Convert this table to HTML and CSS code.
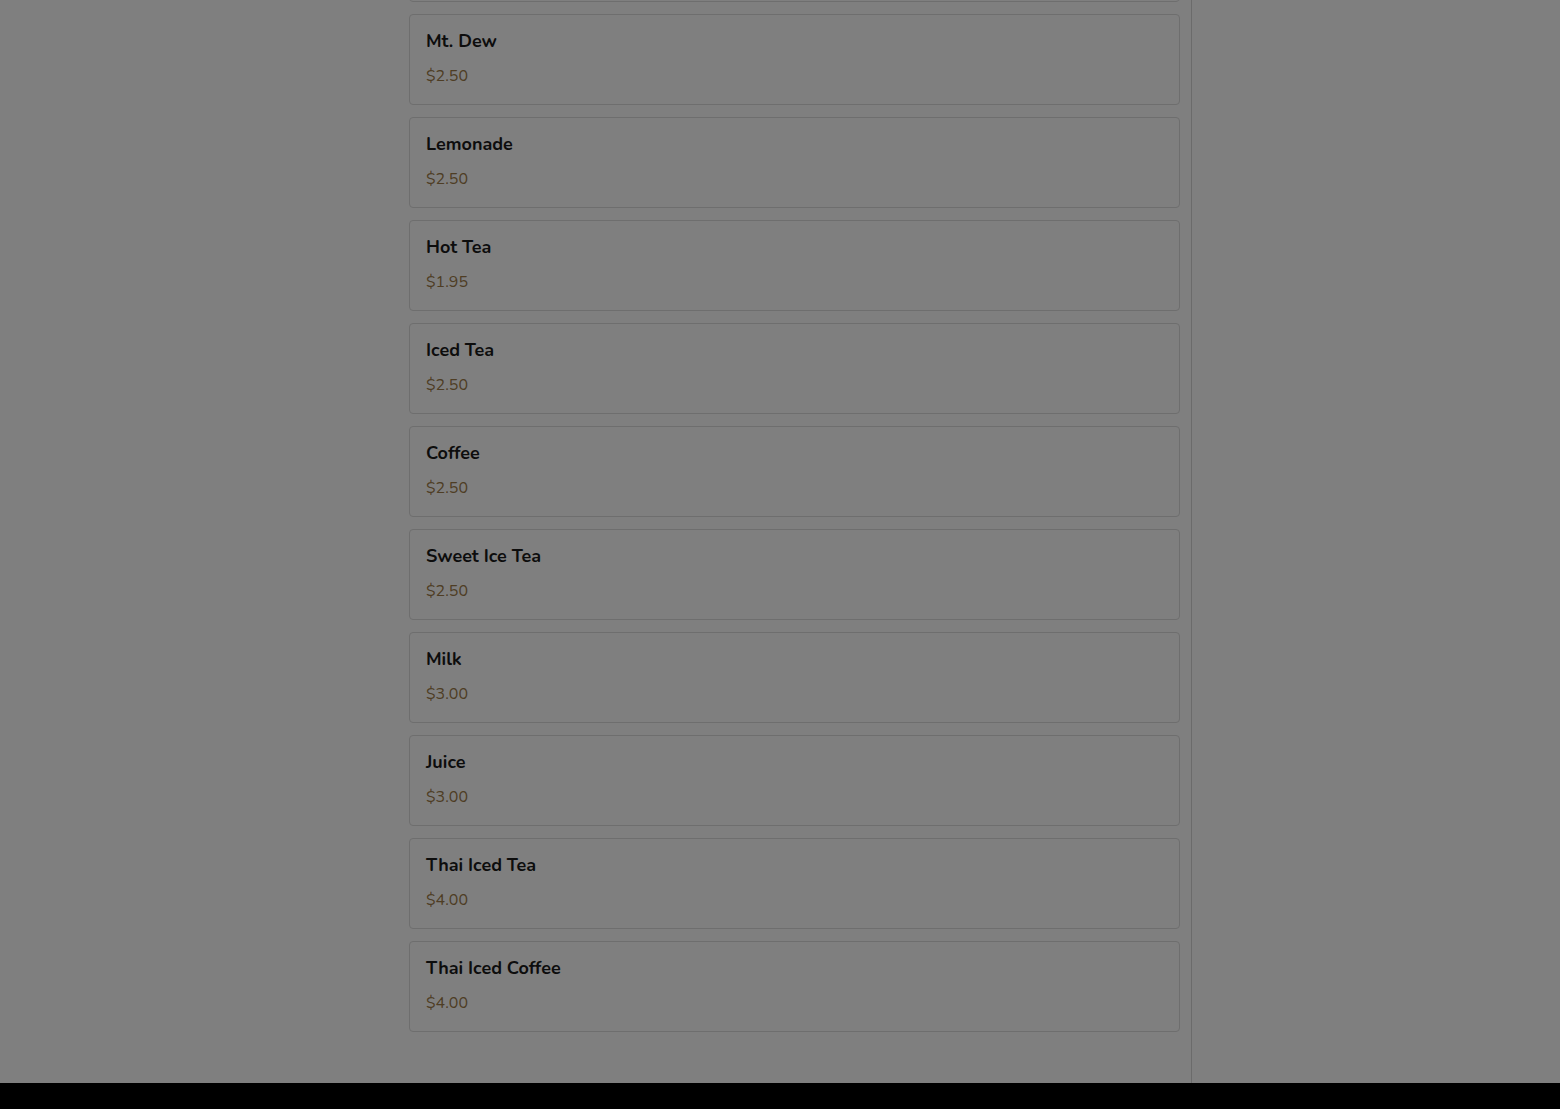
FILE: index.html
```html
<!DOCTYPE html>
<html>
<head>
<meta charset="utf-8">
<link rel="stylesheet" href="styles.css">
</head>
<body>
<div class="app">
  <div class="content">
    <aside class="side"></aside>
    <main class="main">
      <div class="card card-prev"></div>
      <div class="card"><div class="name">Mt. Dew</div><div class="price">$2.50</div></div>
      <div class="card"><div class="name">Lemonade</div><div class="price">$2.50</div></div>
      <div class="card"><div class="name">Hot Tea</div><div class="price">$1.95</div></div>
      <div class="card"><div class="name">Iced Tea</div><div class="price">$2.50</div></div>
      <div class="card"><div class="name">Coffee</div><div class="price">$2.50</div></div>
      <div class="card"><div class="name">Sweet Ice Tea</div><div class="price">$2.50</div></div>
      <div class="card"><div class="name">Milk</div><div class="price">$3.00</div></div>
      <div class="card"><div class="name">Juice</div><div class="price">$3.00</div></div>
      <div class="card"><div class="name">Thai Iced Tea</div><div class="price">$4.00</div></div>
      <div class="card"><div class="name">Thai Iced Coffee</div><div class="price">$4.00</div></div>
    </main>
    <div class="rest"></div>
  </div>
  <footer class="footer"></footer>
</div>
<div class="overlay"></div>
</body>
</html>
```
FILE: styles.css
```css
html, body {
  margin: 0;
  padding: 0;
  height: 1109px;
  overflow: hidden;
  background: #fff;
  font-family: "Nunito", "Open Sans", "Lato", sans-serif;
}
.app {
  display: flex;
  flex-direction: column;
  height: 1109px;
}
.content {
  display: flex;
  height: 1083px;
  flex: none;
}
.side {
  width: 397px;
  flex: none;
}
.main {
  width: 771px;
  flex: none;
  display: flex;
  flex-direction: column;
  justify-content: flex-end;
  gap: 12px;
  padding: 0 11px 51px 12px;
  border-right: 1px solid #d6d6d6;
  overflow: hidden;
}
.rest {
  flex: 1;
}
.card {
  flex: none;
  border: 1px solid #dcdcdc;
  border-radius: 4px;
  padding: 14px 16px 17px;
  background: #fff;
}
.card-prev {
  height: 58px;
}
.name {
  font-size: 18px;
  line-height: 24px;
  font-weight: 700;
  color: #1a1a1a;
}
.price {
  margin-top: 12px;
  font-size: 16px;
  line-height: 22px;
  color: #9c7a48;
}
.footer {
  height: 26px;
  flex: none;
  background: #000;
}
.overlay {
  position: fixed;
  inset: 0;
  background: rgba(0, 0, 0, 0.5);
}
```
